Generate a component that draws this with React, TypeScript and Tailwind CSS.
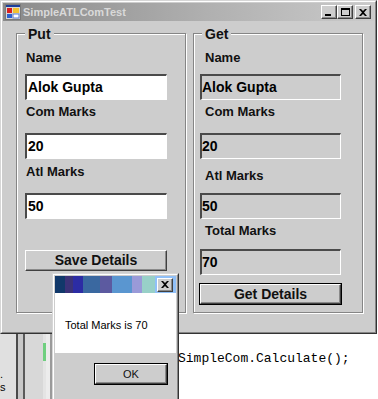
import type { FC, ReactNode } from 'react'

// Classic Win2000-style form with a message box over it.

const Label: FC<{ children: ReactNode; className?: string }> = ({ children, className = '' }) => (
  <div className={`text-[13px] leading-[15px] font-bold text-[#111] whitespace-nowrap ${className}`}>{children}</div>
)

const Field: FC<{ value: string; grey?: boolean; className?: string }> = ({ value, grey, className = '' }) => (
  <div
    className={`h-[26px] flex items-center border-t-2 border-l-2 border-b border-r border-t-[#4a4a4a] border-l-[#4a4a4a] border-b-white border-r-white text-[14px] font-bold text-black ${
      grey ? 'bg-[#cdcdcd]' : 'bg-white pl-px'
    } ${className}`}
  >
    {value}
  </div>
)

const Button: FC<{ children: ReactNode; isDefault?: boolean; className?: string; textClass?: string }> = ({
  children,
  isDefault,
  className = '',
  textClass = 'text-[14px] font-bold',
}) => (
  <div className={`${isDefault ? 'border border-black' : ''} ${className}`}>
    <div
      className={`h-full flex items-center justify-center bg-[#cdcdcd] border border-t-white border-l-white border-b-[#404040] border-r-[#404040] shadow-[inset_-1px_-1px_0_#8a8a8a] text-[#111] ${textClass}`}
    >
      {children}
    </div>
  </div>
)

const GroupBox: FC<{ title: string; children: ReactNode }> = ({ title, children }) => (
  <div className="relative w-[170px] h-[280px] border border-[#858585] shadow-[inset_1px_1px_0_#fff,1px_1px_0_#fff] flex flex-col items-start">
    <span className="absolute left-[8px] top-[-8px] px-[3px] bg-[#cdcdcd] text-[14px] leading-[16px] font-bold text-[#111]">
      {title}
    </span>
    {children}
  </div>
)

const CaptionButton: FC<{ children: ReactNode; className?: string }> = ({ children, className = '' }) => (
  <div
    className={`w-[16px] h-[14px] flex items-center justify-center bg-[#cdcdcd] border border-t-white border-l-white border-b-[#404040] border-r-[#404040] shadow-[inset_-1px_-1px_0_#8a8a8a] ${className}`}
  >
    {children}
  </div>
)

const AppIcon = () => (
  <svg width="16" height="16" viewBox="0 0 16 16">
    <rect x="0.5" y="0.5" width="15" height="15" fill="#d8d8d8" stroke="#7a7a7a" />
    <rect x="1" y="1" width="14" height="2" fill="#1c3f9c" />
    <rect x="2" y="4" width="5" height="5" fill="#d82020" />
    <rect x="8" y="4" width="6" height="5" fill="#f2c12e" />
    <rect x="2" y="10" width="5" height="4" fill="#2c5fd0" />
    <rect x="8" y="10" width="6" height="4" fill="#ffffff" stroke="#5a7ad0" strokeWidth="1" />
  </svg>
)

const CloseGlyph = ({ size = 8 }: { size?: number }) => (
  <svg width={size} height={size - 1} viewBox="0 0 8 7">
    <path d="M0 0h2l2 2 2-2h2L5 3.5 8 7H6L4 5 2 7H0l3-3.5z" fill="#000" />
  </svg>
)

export default function App() {
  return (
    <div className="relative w-[378px] h-[399px] overflow-hidden bg-white font-['Liberation_Sans',Arial,sans-serif]">
      {/* main window */}
      <div className="w-[377px] h-[334px] border border-t-[#d6d6d6] border-l-[#d6d6d6] border-b-[#333] border-r-[#333]">
        <div className="h-full flex flex-col p-px bg-[#cdcdcd] border border-t-white border-l-white border-b-[#858585] border-r-[#858585]">
          <div className="h-[18px] flex items-center bg-[linear-gradient(90deg,#8a8a8a,#b0b0b0_55%,#cacaca)]">
            <div className="ml-[2px]">
              <AppIcon />
            </div>
            <span className="ml-[2px] text-[11px] font-bold text-[#d9d9d9]">SimpleATLComTest</span>
            <div className="ml-auto mr-[3px] flex items-center">
              <CaptionButton>
                <div className="mt-[6px] mr-[3px] w-[6px] h-[2px] bg-black" />
              </CaptionButton>
              <CaptionButton>
                <div className="w-[9px] h-[8px] border border-black border-t-2" />
              </CaptionButton>
              <CaptionButton className="ml-[2px]">
                <CloseGlyph />
              </CaptionButton>
            </div>
          </div>

          <div className="flex pt-[12px] pl-[13px] gap-[7px]">
            <GroupBox title="Put">
              <Label className="mt-[16px] ml-[9px]">Name</Label>
              <Field value="Alok Gupta" className="mt-[9px] ml-[8px] w-[142px]" />
              <Label className="mt-[4px] ml-[9px]">Com Marks</Label>
              <Field value="20" className="mt-[14px] ml-[8px] w-[142px]" />
              <Label className="mt-[5px] ml-[9px]">Atl Marks</Label>
              <Field value="50" className="mt-[14px] ml-[8px] w-[142px]" />
              <Button className="mt-[31px] ml-[8px] w-[142px] h-[21px]">Save Details</Button>
            </GroupBox>

            <GroupBox title="Get">
              <Label className="mt-[16px] ml-[11px]">Name</Label>
              <Field grey value="Alok Gupta" className="mt-[9px] ml-[6px] w-[141px]" />
              <Label className="mt-[4px] ml-[11px]">Com Marks</Label>
              <Field grey value="20" className="mt-[14px] ml-[6px] w-[141px]" />
              <Label className="mt-[9px] ml-[11px]">Atl Marks</Label>
              <Field grey value="50" className="mt-[10px] ml-[6px] w-[141px]" />
              <Label className="mt-[4px] ml-[11px]">Total Marks</Label>
              <Field grey value="70" className="mt-[11px] ml-[6px] w-[141px]" />
              <Button isDefault className="mt-[8px] ml-[5px] w-[143px] h-[22px]">
                Get Details
              </Button>
            </GroupBox>
          </div>
        </div>
      </div>

      {/* editor behind the window */}
      <div className="h-[65px] flex">
        <div className="w-[16px] bg-[#e0e0e0] flex flex-col pt-[34px] text-[11px] leading-[13px] text-black font-['Liberation_Sans',sans-serif]">
          <span>.</span>
          <span>s</span>
        </div>
        <div className="w-[2px] bg-[#4a4a4a]" />
        <div className="w-[5px] bg-[#c8c8c8]" />
        <div className="w-[2px] bg-[#5a5a5a]" />
        <div className="w-[18px] bg-[#d8d8d8]" />
        <div className="w-[3px] bg-[#e4e4e4] pt-[9px]">
          <div className="h-[18px] bg-[#6fcf7f]" />
        </div>
        <div className="w-[4px] bg-[#ececec]" />
        <div className="w-[3px] bg-[#9a9a9a]" />
        <div className="flex-1 pl-[125px] pt-[11px]">
          <span className="text-[13px] leading-[15px] text-black font-['Liberation_Mono','Courier_New',monospace] whitespace-nowrap">
            SimpleCom.Calculate();
          </span>
        </div>
      </div>

      {/* message box */}
      <div className="absolute left-[52px] top-[273px] w-[127px] h-[140px] border border-t-[#d6d6d6] border-l-[#d6d6d6] border-b-[#333] border-r-[#333]">
        <div className="h-full flex flex-col p-px bg-[#cdcdcd] border border-t-white border-l-white border-b-[#858585] border-r-[#858585]">
          <div className="h-[17px] flex items-center bg-[linear-gradient(90deg,#11386a_0px,#11386a_10px,#3b3278_10px,#3b3278_18px,#2c2ca4_18px,#2c2ca4_28px,#3a68a0_28px,#3a68a0_45px,#5c5aa0_45px,#5c5aa0_57px,#5a96d0_57px,#5a96d0_77px,#9a9ad8_77px,#9a9ad8_87px,#98d0c8_87px,#98d0c8_100px,#90c0f8_100px,#90c0f8_100%)]">
            <CaptionButton className="ml-auto mr-[3px] w-[15px] h-[13px]">
              <CloseGlyph />
            </CaptionButton>
          </div>
          <div className="h-[60px] bg-white pl-[10px] pt-[26px] text-[11px] leading-[13px] text-black whitespace-nowrap">
            Total Marks is 70
          </div>
          <div className="flex-1">
            <Button isDefault className="mt-[10px] ml-[39px] w-[74px] h-[22px]" textClass="text-[11px]">
              OK
            </Button>
          </div>
        </div>
      </div>
    </div>
  )
}
